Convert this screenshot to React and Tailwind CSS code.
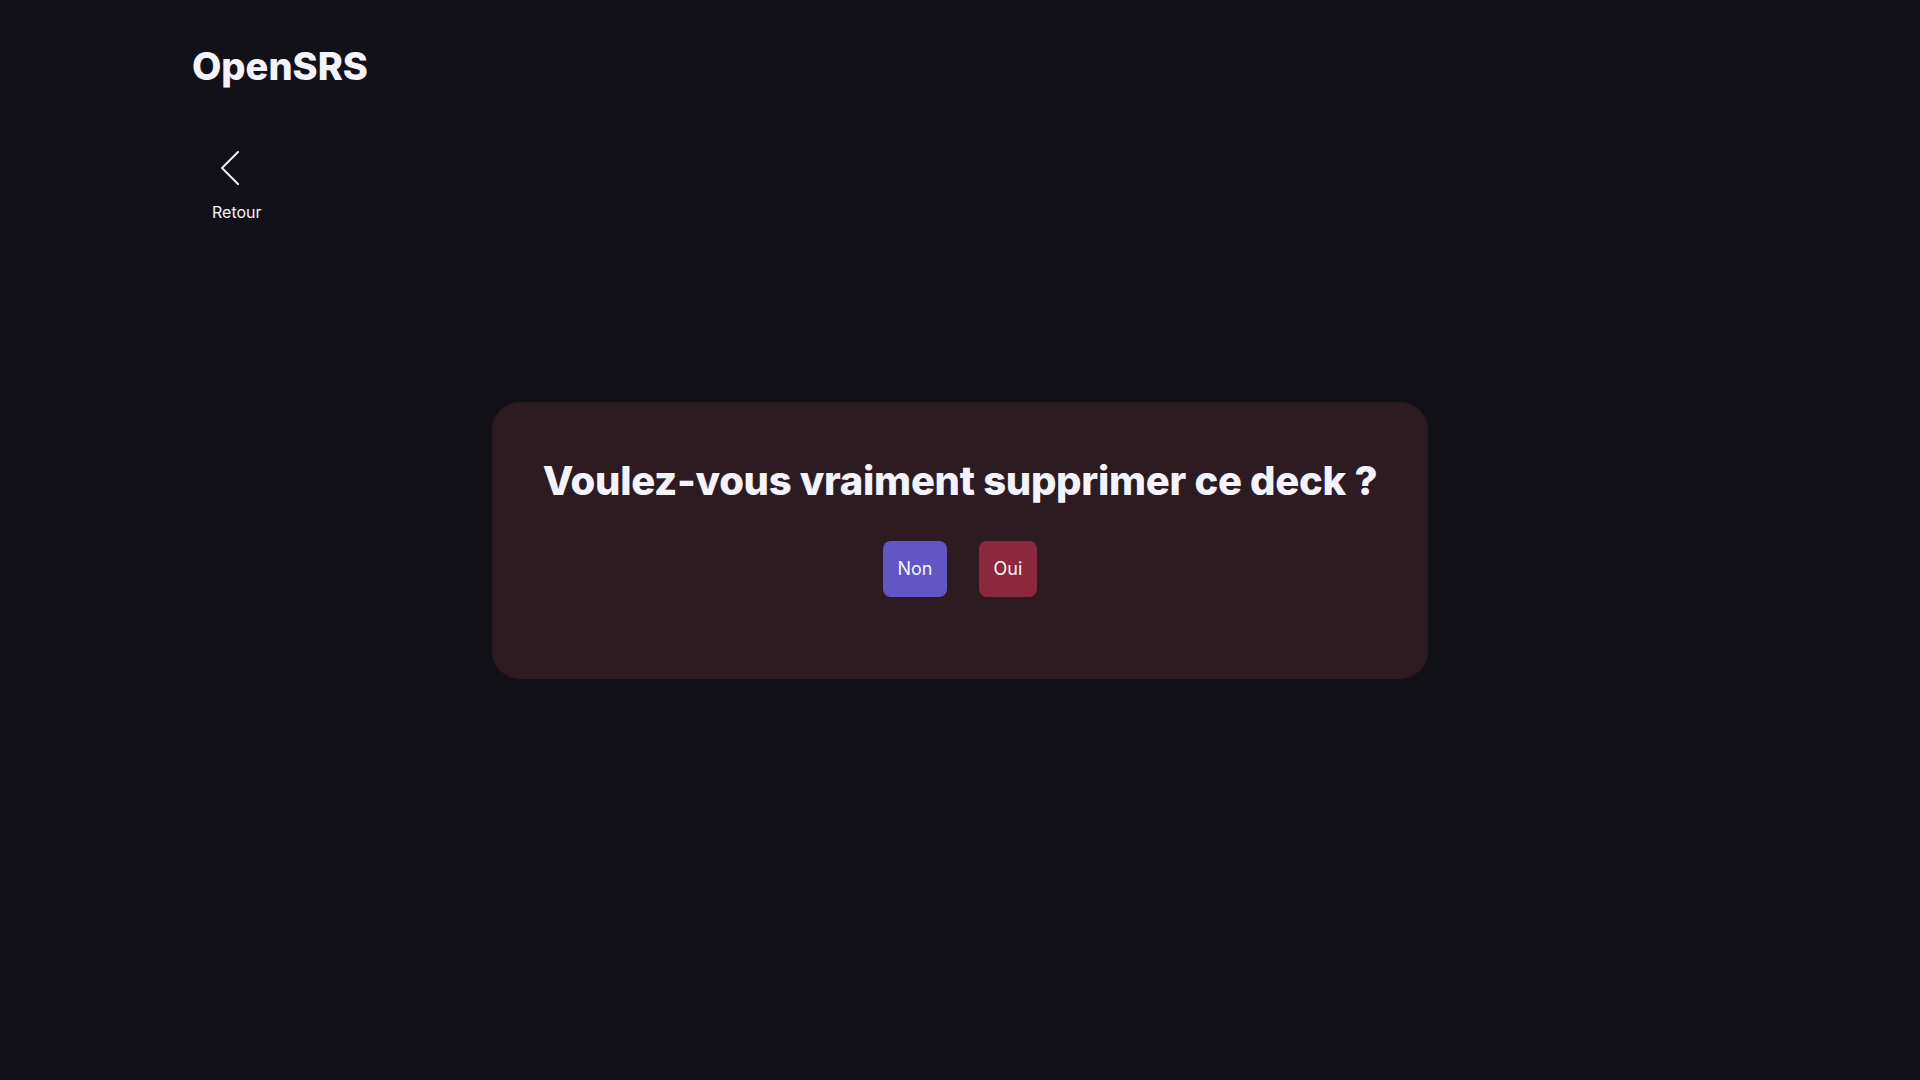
import React from 'react';

export default function App() {
  return (
    <div
      className="min-h-screen bg-[#121118] text-[#f4f3fc]"
      style={{ fontFamily: 'Inter, "Noto Sans", sans-serif' }}
    >
      <header className="px-[192px] pt-[36px]">
        <h1 className="text-[38px] font-extrabold leading-[60px]">OpenSRS</h1>
      </header>

      <nav className="px-[212px] pt-[54px]">
        <button className="flex flex-col items-center gap-[18px] text-[#f4f3fc]">
          <svg width="22" height="36" viewBox="0 0 22 36" fill="none" className="ml-[-14px]">
            <polyline points="19,2 3,18 19,34" stroke="#f4f3fc" strokeWidth="2" strokeLinecap="round" strokeLinejoin="round" />
          </svg>
          <span className="text-[16px] font-normal leading-none">Retour</span>
        </button>
      </nav>

      <div className="fixed inset-0 flex items-center justify-center">
        <div className="w-[936px] h-[277px] bg-[#2c1c22] rounded-[28px] flex flex-col items-center pt-[55px]">
          <h2 className="text-[40px] font-extrabold tracking-[-0.3px] leading-[48px]">
            Voulez-vous vraiment supprimer ce deck ?
          </h2>
          <div className="flex gap-[32px] mt-[36px]">
            <button className="w-[64px] h-[56px] rounded-lg bg-[#6355c4] text-[18px] text-[#f4f3fc]">
              Non
            </button>
            <button className="w-[58px] h-[56px] rounded-lg bg-[#8b283e] text-[18px] text-[#f4f3fc]">
              Oui
            </button>
          </div>
        </div>
      </div>
    </div>
  );
}
